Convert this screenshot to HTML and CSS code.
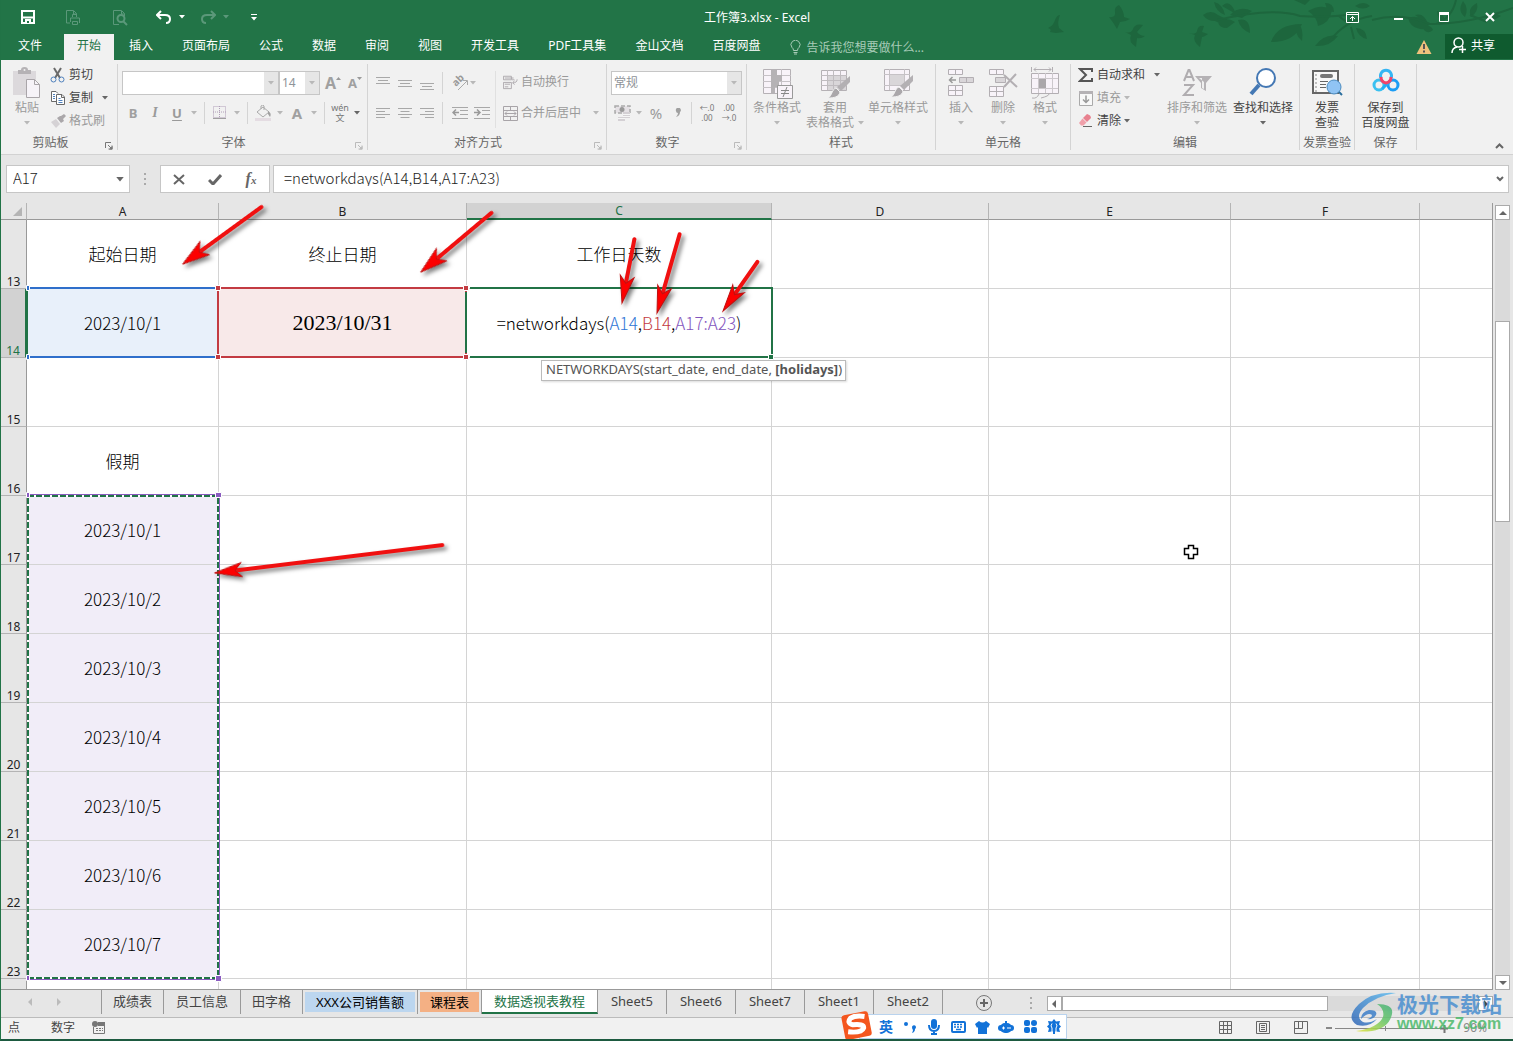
FILE: index.html
```html
<!DOCTYPE html>
<html lang="zh-CN">
<head>
<meta charset="utf-8">
<meta name="viewport" content="width=device-width, initial-scale=1">
<title>工作簿3.xlsx - Excel</title>
<link rel="stylesheet" href="styles.css">
</head>
<body>
<svg class="defs" width="0" height="0" aria-hidden="true">
  <defs>
    <symbol id="caret" viewBox="0 0 6 4"><path d="M0 0h6L3 3.5z" fill="currentColor"/></symbol>
    <symbol id="launcher" viewBox="0 0 8 8"><path d="M.5 6V.5H6M3 3l3.500 3.500M7 3.500V7H3.500" fill="none" stroke="currentColor"/><path d="M7.500 4v3.500H4z" fill="currentColor"/></symbol>
    <symbol id="brush" viewBox="0 0 24 24"><path d="M23 1v6l-9 9-4-4z" fill="#b3b0b3"/><path d="M9 13l4 4c-1 5-6 6-12 6 4-2 4-9 8-10z" fill="#aaa7aa" stroke="#f0f0f0"/></symbol>
  </defs>
</svg>

<header class="top">
  <svg class="foliage" width="480" height="60" viewBox="1033 0 480 60" aria-hidden="true">
    <g fill="#1d663d">
      <path d="M1048 28q6-3 7-8 2-5 5-5-3 7-1 13l5 4-8 1-6-1q2-3-2-4z"/>
      <path d="M1109 17q7 1 6-5-1-5 4-7 5 6 5 12l6 2q-5 3-10 3l-3 7q-4-7-8-12z"/>
      <path d="M1125 32q6 2 8-3 2-6 10-4l-6 7q3 4 8 4-4 3-8 2l-1 9q-8-5-5-12z"/>
      <path d="M1189 33q7 2 8-2 1-6 7-5l-2 6 6 2q-4 3-6 3l-2 10q-8-6-5-12z"/>
      <path d="M1203 15q8-6 15 0l8 4q-4 6-11 2-8 0-12-6zM1214 2q9 2 11 13-9-3-11-13zM1218 22q8-6 17 0l-8 6q-8 0-9-6zM1230 15q9-10 22-4l-10 7zM1238 20q12-3 12 13-10-4-12-13zM1222 6q8-8 14 8z"/>
      <path d="M1271 42q6-18 31-18-7 18-31 18zM1298 24q6 4 4 17-9-7-4-17zM1308 11q14-8 24-1-2 13-14 16-1-9-10-15zM1315 46q9-13 23-10-8 11-23 10zM1294 0h16l-5 5zM1325 3q9 0 9 9-7 0-9-9zM1356 28q10 0 11 11-9-2-11-11zM1355 6q9-6 15 0-7 5-15 0z"/>
      <path d="M1408 18q12-4 21 6-2 8-12 4-7-2-9-10zM1415 15q9-3 13 9zM1422 26q9-2 11 4-7 6-11-4zM1437 11q0 9 8 11-1-9-8-11zM1463 1q-6 10 2 16 4-9-2-16zM1477 3q-10 5-6 14 8-6 6-14zM1485 18q8-8 16-2-8 6-16 2z"/>
    </g>
    <path d="M1218 20q55-13 82-4 30 2 51-2M1329 42q16-22 43-26M1351 27l3 12M1372 20q30-8 58 4 40 0 83-16M1436 24q16-6 20-24M1470 15l17 7M1339 16q13 12 12 0" fill="none" stroke="#1d663d" stroke-width="2"/>
  </svg>
  <div class="titlebar">
    <div class="qat">
      <button aria-label="保存"><svg width="14" height="14" viewBox="0 0 14 14"><path d="M1 1h12v12H1zM1 7.500h12" fill="none" stroke="#fff" stroke-width="2"/><path d="M4 9h6v5H4z" fill="#fff"/><path d="M6 11h2v2H6z" fill="#227447"/></svg></button>
      <button aria-label="快速打印"><svg width="18" height="17" viewBox="0 0 18 17" fill="none" stroke="#5b987a"><path d="M5 14H1.500V1.500h7l3 3V6M8.500 2v3h3M7.500 8V5.500h4V8M5.500 13V9h9v5M7.500 12.500h5v3h-5z"/></svg></button>
      <button aria-label="打印预览"><svg width="16" height="17" viewBox="0 0 16 17" fill="none" stroke="#5b987a"><path d="M7 15.500H1.500v-14h8l3 3V7M9.500 2v3h3"/><circle cx="9" cy="9.500" r="3.500" stroke-width="2"/><path d="M11 12l4 4" stroke-width="2"/></svg></button>
      <button class="pair" aria-label="撤消"><svg width="16" height="14" viewBox="0 0 16 14"><path d="M2 5h7q5 0 5 4t-4 4" fill="none" stroke="#fff" stroke-width="2"/><path d="M5 1L1 5l4 4" fill="none" stroke="#fff" stroke-width="2"/></svg><svg class="c"><use href="#caret"/></svg></button>
      <button class="pair dim" aria-label="恢复"><svg width="16" height="14" viewBox="0 0 16 14"><path d="M14 5H7q-5 0-5 4t4 4M11 1l4 4-4 4" fill="none" stroke="currentColor" stroke-width="2"/></svg><svg class="c"><use href="#caret"/></svg></button>
      <button class="more" aria-label="自定义快速访问工具栏"><svg width="6" height="7" viewBox="0 0 6 7"><path d="M0 0h6v1H0zM0 3h6L3 6.500z" fill="#fff"/></svg></button>
    </div>
    <h1>工作簿3.xlsx - Excel</h1>
    <div class="winbtns">
      <button aria-label="功能区显示选项"><svg width="13" height="11" viewBox="0 0 13 11"><path d="M.5.500h12v10H.5zM.5 2.500h12M6.500 9V4.500M4 7l2.500-2.500L9 7" fill="none" stroke="#fff"/></svg></button>
      <button aria-label="最小化"><svg width="10" height="10" viewBox="0 0 10 10"><path d="M1 6h9v2H1z" fill="#fff"/></svg></button>
      <button aria-label="最大化"><svg width="10" height="10" viewBox="0 0 10 10"><path d="M.5.500h9v9h-9z" fill="none" stroke="#fff"/><path d="M0 0h10v3H0z" fill="#fff"/></svg></button>
      <button aria-label="关闭"><svg width="10" height="10" viewBox="0 0 10 10"><path d="M1 1l8 8M9 1L1 9" stroke="#fff" stroke-width="2"/></svg></button>
    </div>
  </div>
  <nav class="tabs">
    <a href="#" class="file">文件</a><a href="#" class="on">开始</a><a href="#">插入</a><a href="#">页面布局</a><a href="#">公式</a><a href="#">数据</a><a href="#">审阅</a><a href="#">视图</a><a href="#">开发工具</a><a href="#">PDF工具集</a><a href="#">金山文档</a><a href="#">百度网盘</a>
    <label class="tell"><svg width="11" height="15" viewBox="0 0 11 15" fill="none" stroke="#a7cbb7"><path d="M3.500 10.500Q3.500 8.500 2 7.500a4.500 4.500 0 1 1 7 0Q7.500 8.500 7.500 10.500zM3.500 12.500h4M4 14h3"/></svg><input type="text" placeholder="告诉我您想要做什么..." aria-label="告诉我您想要做什么"></label>
    <svg class="warn" width="16" height="14" viewBox="0 0 16 14"><path d="M8 0l7.500 14H.5z" fill="#efc27c"/><path d="M7 4h2v5H7zM7 10.500h2v2H7z" fill="#555"/></svg>
    <button class="share"><svg width="16" height="17" viewBox="0 0 16 17" fill="none" stroke="#fff" stroke-width="1.500"><circle cx="7.500" cy="5.500" r="4.500"/><path d="M1 16q0-5 5-6M8 12.500h7M11.500 9v7"/></svg>共享</button>
  </nav>
</header>

<section class="ribbon" aria-label="功能区">
  <div class="group g-clip">
    <div class="body">
      <button class="big off"><svg width="30" height="32" viewBox="0 0 30 32"><path d="M1 4h23v24H1z" fill="#dcd9dc"/><path d="M6 3h3q0-3 3.500-3T16 3h3v4H6z" fill="#b5b2b5"/><circle cx="12.500" cy="3" r="1" fill="#f0f0f0"/><path d="M14.500 12.500h8l5 5v13h-13z" fill="#f6f3f8" stroke="#a9a5a9"/><path d="M22.500 12.500v5h5" fill="none" stroke="#a9a5a9"/></svg><span>粘贴</span><svg class="c"><use href="#caret"/></svg></button>
      <div class="stack">
        <button><svg width="16" height="16" viewBox="0 0 16 16"><path d="M4 1l6 10M11 1L5 11" stroke="#6a6a6a" stroke-width="2"/><circle cx="3.500" cy="12.500" r="2.500" fill="none" stroke="#4f81bd"/><circle cx="11.500" cy="12.500" r="2.500" fill="none" stroke="#4f81bd"/></svg>剪切</button>
        <button><svg width="16" height="16" viewBox="0 0 16 16"><path d="M6 11.500H1.500v-10H6l2 2" fill="#fff" stroke="#6a6a6a"/><path d="M6.500 4.500H12l2.500 2.500v7.500h-8zM11.500 4.500v3h3" fill="#fff" stroke="#6a6a6a"/><path d="M3 4.500h2M3 6.500h2M3 8.500h2M8.500 8.500h2M8.500 10.500h4M8.500 12.500h4" stroke="#4f81bd"/></svg>复制<svg class="c far"><use href="#caret"/></svg></button>
        <button class="off"><svg width="16" height="16" viewBox="0 0 16 16"><path d="M11 3l3-2 2 2-3 3 1 2-3 2-4-5 3-2z" fill="#aaa7aa"/><path d="M6 6l4 5-4 4-5-6z" fill="#d5d2d5"/></svg>格式刷</button>
      </div>
    </div>
    <footer>剪贴板<svg class="l dark"><use href="#launcher"/></svg></footer>
  </div>

  <div class="group g-font off">
    <div class="body rows">
      <div class="row top-row">
        <label class="combo w-name"><select aria-label="字体"><option></option></select><svg class="c"><use href="#caret"/></svg></label><label class="combo w-size"><select aria-label="字号"><option>14</option></select><svg class="c"><use href="#caret"/></svg></label>
        <button class="ic grow"><b class="f18">A</b><svg width="5" height="12" viewBox="0 0 5 12"><path d="M0 3l2.500-3L5 3z" fill="currentColor"/></svg></button>
        <button class="ic"><b>A</b><svg width="5" height="12" viewBox="0 0 5 12"><path d="M0 0h5L2.500 3z" fill="currentColor"/></svg></button>
      </div>
      <div class="row">
        <button class="ic"><b>B</b></button><button class="ic"><i>I</i></button><button class="ic"><u>U</u></button><button class="ar"><svg class="c"><use href="#caret"/></svg></button>
        <span class="sep"></span>
        <button class="ic"><svg width="14" height="14" viewBox="0 0 14 14"><path d="M.5.500h12v11H.5zM6.500 0v12M0 6h13" fill="none" stroke="#b09fb8" stroke-dasharray="1 1"/><path d="M0 12h13v1H0z" fill="#a0a0a0"/></svg></button><button class="ar"><svg class="c"><use href="#caret"/></svg></button>
        <span class="sep"></span>
        <button class="ic"><svg width="17" height="17" viewBox="0 0 17 17"><path d="M0 13h16v3H0z" fill="#e4dce2"/><path d="M2 7l6-5 6 5-6 5zM6 4V1q2-2 3 0v4" fill="none" stroke="#aaa"/><path d="M13 6q4 2 2 6l-2-3z" fill="#a0a0a0"/></svg></button><button class="ar"><svg class="c"><use href="#caret"/></svg></button>
        <button class="ic"><b class="f15">A</b></button><button class="ar"><svg class="c"><use href="#caret"/></svg></button>
        <span class="sep"></span>
        <button class="ic wen"><span>wén</span><span>文</span></button><button class="ar on"><svg class="c"><use href="#caret"/></svg></button>
      </div>
    </div>
    <footer>字体<svg class="l"><use href="#launcher"/></svg></footer>
  </div>

  <div class="group g-align off">
    <div class="body rows">
      <div class="row top-row">
        <button class="ic"><svg width="14" height="14" viewBox="0 0 14 14"><path d="M0 1.500h14M2 4.500h10M0 7.500h14" stroke="#a8a8a8"/></svg></button>
        <button class="ic"><svg width="14" height="14" viewBox="0 0 14 14"><path d="M0 4.500h14M2 7.500h10M0 10.500h14" stroke="#a8a8a8"/></svg></button>
        <button class="ic"><svg width="14" height="14" viewBox="0 0 14 14"><path d="M0 7.500h14M2 10.500h10M0 13.500h14" stroke="#a8a8a8"/></svg></button>
        <span class="sep tight"></span>
        <button class="ic"><svg class="orient" width="18" height="18" viewBox="0 0 18 18"><text x="5" y="13" font-size="10" font-weight="bold" fill="#999" transform="rotate(-45 5 13)">ab</text><path d="M7 16L16 7M12 6.500h4.500V11" fill="none" stroke="#aaa"/></svg></button><button class="ar narrow"><svg class="c"><use href="#caret"/></svg></button>
      </div>
      <div class="row">
        <button class="ic"><svg width="14" height="12" viewBox="0 0 14 12"><path d="M0 1.500h14M0 4.500h9M0 7.500h14M0 10.500h9" stroke="#a8a8a8"/></svg></button>
        <button class="ic"><svg width="14" height="12" viewBox="0 0 14 12"><path d="M0 1.500h14M2.500 4.500h9M0 7.500h14M2.500 10.500h9" stroke="#a8a8a8"/></svg></button>
        <button class="ic"><svg width="14" height="12" viewBox="0 0 14 12"><path d="M0 1.500h14M5 4.500h9M0 7.500h14M5 10.500h9" stroke="#a8a8a8"/></svg></button>
        <span class="sep tight"></span>
        <button class="ic"><svg width="16" height="14" viewBox="0 0 16 14"><path d="M0 1.500h16M8 4.500h8M8 8.500h8M0 12.500h16" stroke="#a8a8a8"/><path d="M7 6.500H1M4 3.500l-3 3 3 3" fill="none" stroke="#999" stroke-width="1.500"/></svg></button>
        <button class="ic"><svg width="16" height="14" viewBox="0 0 16 14"><path d="M0 1.500h16M8 4.500h8M8 8.500h8M0 12.500h16" stroke="#a8a8a8"/><path d="M0 6.500h6M3 3.500l3 3-3 3" fill="none" stroke="#999" stroke-width="1.500"/></svg></button>
      </div>
    </div>
    <div class="wraps">
      <button><svg width="15" height="16" viewBox="0 0 17 16" fill="none" stroke="#a8a4a8"><path d="M.5 1.500h9v4h-9zM.5 8.500h9v7h-9zM2 3.500h10M2 10.500h6M2 13.500h4M10 5.500h3M16 5q0 4-5 4M13 6.500L11 9l2 2"/></svg>自动换行</button>
      <button><svg width="15" height="15" viewBox="0 0 15 15" fill="none" stroke="#a8a4a8"><path d="M.5.500h14v14H.5zM.5 4.500h14M.5 10.500h14M7.500 0v4M7.500 11v4M2 7.500h11M4 5.500l-2 2 2 2M11 5.500l2 2-2 2"/></svg>合并后居中<svg class="c far"><use href="#caret"/></svg></button>
    </div>
    <footer>对齐方式<svg class="l"><use href="#launcher"/></svg></footer>
  </div>

  <div class="group g-num off">
    <div class="body rows">
      <div class="row top-row"><label class="combo w-num"><select aria-label="数字格式"><option>常规</option></select><svg class="c"><use href="#caret"/></svg></label></div>
      <div class="row">
        <button class="ic"><svg width="17" height="16" viewBox="0 0 17 16"><path d="M1 1h15v7H1z" fill="#e5e1e5" stroke="#aaa" stroke-width="1.500" stroke-dasharray="4 2"/><circle cx="8" cy="4.500" r="2.500" fill="#999"/><path d="M9 7h7v6H9zM4 12h7v4H4z" fill="#d4d0d4"/><path d="M9 9.500h7M9 11.500h7M4 13.500h7" stroke="#f5f5f5"/></svg></button><button class="ar"><svg class="c"><use href="#caret"/></svg></button>
        <button class="ic pct">%</button><button class="ic"><svg width="6" height="10" viewBox="0 0 6 10"><path d="M1 3a2.500 2.500 0 1 1 4 1Q5 8 1 9 3 7 3 5 1 5 1 3z" fill="#a0a0a0"/></svg></button>
        <span class="sep slim"></span>
        <button class="ic dec"><span>←.0</span><span>.00</span></button><button class="ic dec"><span>.00</span><span>→.0</span></button>
      </div>
    </div>
    <footer>数字<svg class="l"><use href="#launcher"/></svg></footer>
  </div>

  <div class="group g-style">
    <div class="body">
      <button class="big off"><svg width="32" height="32" viewBox="0 0 32 32"><path d="M2.500 2.500h27v24h-27z" fill="#f8f3f9" stroke="#b5b1b5"/><path d="M2 8.500h28M2 14.500h28M2 20.500h28M20.500 2v24" stroke="#c6c2c6"/><path d="M10 2h6v6h-6zM10 8h11v6H10zM10 14h8v6h-8zM10 20h4v6h-4z" fill="#b5b2b5"/><path d="M16.500 18.500h15v13h-15z" fill="#f8f3f9" stroke="#999"/><path d="M20 23.500h8M20 26.500h8M26 20l-4 10" stroke="#888"/></svg><span>条件格式</span><svg class="c"><use href="#caret"/></svg></button>
      <button class="big off mid"><svg width="32" height="32" viewBox="0 0 32 32"><path d="M2.500 3.500h25v20h-25z" fill="#f8f3f9" stroke="#b5b1b5"/><path d="M9 9h18v14H9z" fill="#d9d6d9"/><path d="M2 8.500h26M2 13.500h26M2 18.500h26M8.500 3v20M14.500 3v20M21.500 3v20" stroke="#c0bcc0"/><use href="#brush" x="8" y="8" width="24" height="24"/></svg><span>套用<br>表格格式<svg class="c"><use href="#caret"/></svg></span></button>
      <button class="big off wide"><svg width="32" height="32" viewBox="0 0 32 32"><path d="M2.500 2.500h25v21h-25z" fill="#f8f3f9" stroke="#b5b1b5"/><path d="M2 7.500h26M2 18.500h26M7.500 2v21M22.500 2v21" stroke="#c6c2c6"/><path d="M8 8h14v10H8z" fill="#d9d6d9"/><use href="#brush" x="8" y="7" width="24" height="24"/></svg><span>单元格样式</span><svg class="c"><use href="#caret"/></svg></button>
    </div>
    <footer>样式</footer>
  </div>

  <div class="group g-cells">
    <div class="body">
      <button class="big off"><svg width="28" height="32" viewBox="0 0 28 32" fill="#f8f3f9" stroke="#b3afb3"><path d="M1.500 2.500h14v5h-14zM8.500 2v5M1.500 18.500h14v10h-14zM8.500 18v10M1 23.500h14"/><path d="M12.500 10.500h14v5h-14zM19.500 10v5" fill="#d9d6d9"/><path d="M9 13H3M5.500 10L2.500 13l3 3" fill="none" stroke="#999" stroke-width="1.500"/></svg><span>插入</span><svg class="c"><use href="#caret"/></svg></button>
      <button class="big off"><svg width="30" height="32" viewBox="0 0 30 32" fill="#f8f3f9" stroke="#b3afb3"><path d="M1.500 2.500h14v5h-14zM8.500 2v5M1.500 19.500h14v10h-14zM8.500 19v10M1 24.500h14"/><path d="M7.500 10.500h10v5h-10z" fill="#d9d6d9"/><path d="M16 8l13 12M28 7L16 20" fill="none" stroke-width="2"/></svg><span>删除</span><svg class="c"><use href="#caret"/></svg></button>
      <button class="big off"><svg width="28" height="32" viewBox="0 0 28 32" fill="#f8f3f9" stroke="#b3afb3"><path d="M.5 6.500h27v20H.5z"/><path d="M0 11.500h27M0 21.500h27M7.500 6v20M14.500 6v20M21.500 6v20" stroke="#ccc8cc"/><path d="M8 12h7v9H8z" fill="#aaa7aa" stroke="none"/><path d="M.5 0v5M21.500 0v5M3 2.500h17M5 .5l-2 2 2 2M18 .5l2 2-2 2M1 31q5 1 7-4M10 31q8-2 8-4" fill="none"/></svg><span>格式</span><svg class="c"><use href="#caret"/></svg></button>
    </div>
    <footer>单元格</footer>
  </div>

  <div class="group g-edit">
    <div class="body">
      <div class="stack">
        <button><svg width="16" height="16" viewBox="0 0 16 16"><path d="M14 5V2H2l6 6-6 6h12v-3" fill="none" stroke="#555" stroke-width="2"/></svg>自动求和<svg class="c far"><use href="#caret"/></svg></button>
        <button class="off"><svg width="16" height="16" viewBox="0 0 16 16"><path d="M1.500 1.500h13v14h-13z" fill="#f8f8f8" stroke="#aaa"/><path d="M1 1h14v3H1z" fill="#b5b2b5"/><path d="M8 5.500v7M5 9.500l3 3 3-3" fill="none" stroke="#999" stroke-width="1.500"/></svg>填充<svg class="c"><use href="#caret"/></svg></button>
        <button><svg width="16" height="16" viewBox="0 0 16 16"><path d="M9 1q4 1 4 4L9 9 5 5z" fill="#e8818f"/><path d="M4.500 5.500l4 4-3 3H3L1 10z" fill="#f0a0aa"/><path d="M5 13.500h9" stroke="#666"/></svg>清除<svg class="c"><use href="#caret"/></svg></button>
      </div>
      <button class="big off"><svg width="30" height="32" viewBox="0 0 30 32"><path d="M2 14L6.500 3h1L12 14M4 10h6M2 18h9L2 28h10" fill="none" stroke="#b0adb0" stroke-width="2"/><path d="M13 9h17l-6 7v8l-5-3v-5z" fill="#b5b2b5"/><path d="M17 11h3v10l2 1v-7z" fill="#efefef"/></svg><span>排序和筛选</span><svg class="c"><use href="#caret"/></svg></button>
      <button class="big"><svg width="30" height="32" viewBox="0 0 30 32"><circle cx="18" cy="11" r="9" fill="#fff" stroke="#4478b4" stroke-width="2"/><path d="M11 18l-8 9" stroke="#4478b4" stroke-width="4"/></svg><span>查找和选择</span><svg class="c"><use href="#caret"/></svg></button>
    </div>
    <footer>编辑</footer>
  </div>

  <div class="group g-inv">
    <div class="body"><button class="big"><svg width="32" height="32" viewBox="0 0 32 32"><path d="M2 4h25v22H2z" fill="#f8f8f8" stroke="#666" stroke-width="2"/><path d="M5 7v18" stroke="#888" stroke-dasharray="2 2"/><rect x="9" y="7" width="13" height="4" rx="2" fill="#777"/><path d="M9 14.500h8M9 17.500h6M9 20.500h6" stroke="#666"/><circle cx="23" cy="20" r="7" fill="#90c4f4" stroke="#4c8cc0"/><path d="M28 25l3 3" stroke="#2a6e9e" stroke-width="2"/></svg><span>发票<br>查验</span></button></div>
    <footer>发票查验</footer>
  </div>
  <div class="group g-save">
    <div class="body"><button class="big"><svg width="28" height="32" viewBox="0 0 28 32" fill="none" stroke-width="3"><circle cx="7" cy="18" r="5" stroke="#3ac0f0"/><circle cx="21" cy="18" r="5" stroke="#1b9df5"/><path d="M10 22l8-8" stroke="#22aef5"/><path d="M9 11a5.500 5.500 0 1 1 10 0" stroke="#35b5f3"/><path d="M9 10q0 5 5 6 5-1 5-6" stroke="#f0446a"/></svg><span>保存到<br>百度网盘</span></button></div>
    <footer>保存</footer>
  </div>
  <button class="collapse" aria-label="折叠功能区"><svg width="9" height="6" viewBox="0 0 9 6"><path d="M1 5l3.500-3.500L8 5" fill="none" stroke="#666" stroke-width="2"/></svg></button>
</section>

<section class="formula" aria-label="编辑栏">
  <label class="namebox"><input type="text" value="A17" aria-label="名称框"><svg class="c"><use href="#caret"/></svg></label>
  <svg class="grip" width="3" height="12" viewBox="0 0 3 12"><path d="M0 0h2v2H0zM0 5h2v2H0zM0 10h2v2H0z" fill="#aaa"/></svg>
  <div class="fbtns">
    <button aria-label="取消"><svg width="12" height="11" viewBox="0 0 12 11"><path d="M1 1l10 9M11 1L1 10" stroke="#666" stroke-width="2"/></svg></button>
    <button aria-label="输入"><svg width="14" height="11" viewBox="0 0 14 11"><path d="M1 6l4 4 8-9" fill="none" stroke="#666" stroke-width="3"/></svg></button>
    <button aria-label="插入函数" class="fx">f<small>x</small></button>
  </div>
  <label class="fbox"><input type="text" value="=networkdays(A14,B14,A17:A23)" aria-label="公式"><svg width="8" height="6" viewBox="0 0 8 6"><path d="M1 1l3 3 3-3" fill="none" stroke="#666" stroke-width="2"/></svg></label>
</section>

<main class="sheet">
  <div class="grid">
    <table>
      <colgroup><col class="c0"><col class="ca"><col class="cb"><col class="cc"><col class="cd"><col class="ce"><col class="cf"><col></colgroup>
      <thead><tr><th class="corner"><svg width="9" height="9" viewBox="0 0 9 9"><path d="M9 0v9H0z" fill="#b4b4b4"/></svg></th><th>A</th><th>B</th><th class="sel">C</th><th>D</th><th>E</th><th>F</th><th></th></tr></thead>
      <tbody>
        <tr><th>13</th><td>起始日期</td><td>终止日期</td><td>工作日天数</td><td></td><td></td><td></td><td></td></tr>
        <tr><th class="sel">14</th><td class="blue">2023/10/1</td><td class="red">2023/10/31</td><td>=networkdays(<span class="t-blue">A14</span>,<span class="t-red">B14</span>,<span class="t-pur">A17:A23</span>)</td><td></td><td></td><td></td><td></td></tr>
        <tr><th>15</th><td></td><td></td><td></td><td></td><td></td><td></td><td></td></tr>
        <tr><th>16</th><td>假期</td><td></td><td></td><td></td><td></td><td></td><td></td></tr>
        <tr><th>17</th><td class="pur">2023/10/1</td><td></td><td></td><td></td><td></td><td></td><td></td></tr>
        <tr><th>18</th><td class="pur">2023/10/2</td><td></td><td></td><td></td><td></td><td></td><td></td></tr>
        <tr><th>19</th><td class="pur">2023/10/3</td><td></td><td></td><td></td><td></td><td></td><td></td></tr>
        <tr><th>20</th><td class="pur">2023/10/4</td><td></td><td></td><td></td><td></td><td></td><td></td></tr>
        <tr><th>21</th><td class="pur">2023/10/5</td><td></td><td></td><td></td><td></td><td></td><td></td></tr>
        <tr><th>22</th><td class="pur">2023/10/6</td><td></td><td></td><td></td><td></td><td></td><td></td></tr>
        <tr><th>23</th><td class="pur">2023/10/7</td><td></td><td></td><td></td><td></td><td></td><td></td></tr>
        <tr><th></th><td></td><td></td><td></td><td></td><td></td><td></td><td></td></tr>
      </tbody>
    </table>
    <div class="hint">NETWORKDAYS(start_date, end_date, <b>[holidays]</b>)</div>
    <svg class="marks" width="1490" height="786" viewBox="1 203 1490 786" aria-hidden="true">
      <g fill="none" stroke-width="2">
        <path d="M27 288h191M27 357h191" stroke="#2f6fcb"/>
        <path d="M27 288v69" stroke="#217346"/>
        <path d="M218 288h248v69H218z" stroke="#c33b42"/>
        <path d="M470 288h302v69M768 357H470M466 292v61" stroke="#217346"/>
        <path d="M28 496h190v482H28z" stroke="#fff"/>
        <path d="M28 496h190v482H28z" stroke="#217346" stroke-dasharray="6 2"/>
        <path d="M219.500 496v483M27 494.500h192M27 979.500h192" stroke="#8a5bc0" stroke-width="1"/>
      </g>
      <g stroke="#fff">
        <path d="M26.500 285.500h3v5h-3zM26.500 354.500h3v5h-3z" fill="#2f6fcb"/>
        <path d="M215.500 285.500h5v5h-5zM215.500 354.500h5v5h-5zM463.500 285.500h5v5h-5zM463.500 354.500h5v5h-5z" fill="#c33b42"/>
        <path d="M768.500 354.500h5v5h-5z" fill="#217346"/>
        <path d="M26.500 492.500h3v5h-3zM215.500 492.500h6v5h-6zM26.500 975.500h3v5h-3zM215.500 975.500h6v6h-6z" fill="#8a5bc0"/>
      </g>
      <g class="arrows">
        <g transform="translate(183 264) rotate(144)"><path d="M-97 0h77"/><path class="h" d="M0 0L-27-8-20 0-27 8z"/></g>
        <g transform="translate(421 272) rotate(140)"><path d="M-92 0h72"/><path class="h" d="M0 0L-27-8-20 0-27 8z"/></g>
        <g transform="translate(622 303) rotate(101)"><path d="M-65 0h45"/><path class="h" d="M0 0L-27-7-20 0-27 7z"/></g>
        <g transform="translate(657 313) rotate(106)"><path d="M-82 0h62"/><path class="h" d="M0 0L-27-7-20 0-27 7z"/></g>
        <g transform="translate(723 311) rotate(125)"><path d="M-60 0h40"/><path class="h" d="M0 0L-27-7-20 0-27 7z"/></g>
        <g transform="translate(215 573) rotate(173)"><path d="M-229 0h209"/><path class="h" d="M0 0L-27-7-20 0-27 7z"/></g>
      </g>
      <path d="M1188.500 545.500h5v3h4v6h-4v4h-5v-4h-4v-6h4z" fill="#fff" stroke="#000" stroke-width="1.500"/>
    </svg>
  </div>
  <div class="vscroll">
    <button aria-label="向上"><svg width="8" height="4" viewBox="0 0 8 4"><path d="M0 4h8L4 0z" fill="#666"/></svg></button>
    <div class="vtrack"><div class="vthumb"></div></div>
    <button aria-label="向下"><svg width="8" height="4" viewBox="0 0 8 4"><path d="M0 0h8L4 4z" fill="#666"/></svg></button>
  </div>
</main>

<nav class="sheets">
  <div class="arrowsnav"><svg width="4" height="8" viewBox="0 0 4 8"><path d="M4 0v8L0 4z" fill="#bbb"/></svg><svg width="4" height="8" viewBox="0 0 4 8"><path d="M0 0v8l4-4z" fill="#bbb"/></svg></div>
  <a href="#">成绩表</a><a href="#" class="w2">员工信息</a><a href="#">田字格</a><a href="#" class="cblue"><span>XXX公司销售额</span></a><a href="#" class="cor"><span>课程表</span></a><a href="#" class="active">数据透视表教程</a><a href="#" class="s">Sheet5</a><a href="#" class="s">Sheet6</a><a href="#" class="s">Sheet7</a><a href="#" class="s">Sheet1</a><a href="#" class="s">Sheet2</a>
  <button class="add" aria-label="新工作表"><svg width="16" height="16" viewBox="0 0 16 16"><circle cx="8" cy="8" r="7.500" fill="none" stroke="#777"/><path d="M4 8h8M8 4v8" stroke="#666" stroke-width="2"/></svg></button>
  <svg class="grip2" width="3" height="12" viewBox="0 0 3 12"><path d="M0 0h2v2H0zM0 5h2v2H0zM0 10h2v2H0z" fill="#aaa"/></svg>
  <div class="hscroll">
    <button aria-label="向左"><svg width="4" height="8" viewBox="0 0 4 8"><path d="M4 0v8L0 4z" fill="#666"/></svg></button>
    <div class="hthumb"></div>
    <button aria-label="向右"><svg width="4" height="8" viewBox="0 0 4 8"><path d="M0 0v8l4-4z" fill="#444"/></svg></button>
  </div>
</nav>

<footer class="status">
  <span class="mode">点</span><span class="num">数字</span>
  <svg width="13" height="13" viewBox="0 0 13 13"><path d="M3 2.500h9.500v10H1.500V6" fill="none" stroke="#777"/><path d="M6 1h7v4H6z" fill="#777"/><circle cx="3" cy="3" r="3" fill="#777"/><path d="M4 7.500h7M4 9.500h7" stroke="#777" stroke-dasharray="2 1"/></svg>
  <div class="views">
    <svg width="13" height="13" viewBox="0 0 13 13"><path d="M.5.500h12v12H.5zM4.500 0v13M8.500 0v13M0 4.500h13M0 8.500h13" fill="none" stroke="#666"/></svg>
    <svg width="14" height="13" viewBox="0 0 14 13"><path d="M.5.500h13v12H.5zM3.500 2.500h7v8h-7zM5 4.500h4M5 6.500h4M5 8.500h4" fill="none" stroke="#666"/></svg>
    <svg width="14" height="13" viewBox="0 0 14 13"><path d="M.5.500h13v12H.5zM.5 7.500h8M4.500.5v7M8.500.5v7" fill="none" stroke="#666"/></svg>
  </div>
  <svg class="zoom" width="126" height="12" viewBox="0 0 126 12"><path d="M1 5h6v2H1z" fill="#888"/><path d="M10 6.500h105M60.500 4v5" stroke="#888"/><path d="M115 6.500h8M119.500 3v8" stroke="#777" stroke-width="2"/></svg>
  <span class="pct90">90%</span>
</footer>

<div class="ime">
  <svg class="sogou" width="32" height="31" viewBox="0 0 32 31"><g transform="rotate(-11 16 15)"><rect x="2" y="3" width="27" height="25" rx="3" fill="#f4561e"/><path d="M25 8q-9-3-14-1-5 4 1 7 11 1 10 5-3 5-16 1" fill="none" stroke="#fff" stroke-width="5"/></g></svg>
  <b>英</b>
  <svg width="14" height="14" viewBox="0 0 14 14"><circle cx="3" cy="4" r="2" fill="#1272d8"/><path d="M9 7a2 2 0 1 1 3 2q0 3-3 4 1-2 1-3-1-1-1-3z" fill="#1272d8"/></svg>
  <svg width="12" height="16" viewBox="0 0 12 16"><rect x="3" y="0" width="6" height="10" rx="3" fill="#1272d8"/><path d="M1 6q0 6 5 6t5-6M6 12v2M3 15h6" fill="none" stroke="#1272d8" stroke-width="2"/></svg>
  <svg width="15" height="12" viewBox="0 0 15 12"><rect x="1" y="1" width="13" height="10" rx="1" fill="none" stroke="#1272d8" stroke-width="2"/><path d="M3 3.500h9M3 6h9" stroke="#1272d8" stroke-width="1.500" stroke-dasharray="2 1"/><path d="M5 8.500h5" stroke="#1272d8" stroke-width="1.500"/></svg>
  <svg width="15" height="14" viewBox="0 0 15 14"><path d="M4 1q3.500 3 7 0l4 3-2 4-1-1v7H3V7L2 8 0 4z" fill="#1272d8"/></svg>
  <svg width="16" height="14" viewBox="0 0 16 14"><path d="M8 1v3" stroke="#1272d8" stroke-width="2"/><rect x="0" y="5" width="16" height="6" rx="3" fill="#1272d8"/><rect x="2" y="3" width="12" height="10" rx="5" fill="#1272d8"/><path d="M4 8h3M5.500 6.500v3M10 7v2" stroke="#fff"/><path d="M12 7v2" stroke="#fff"/></svg>
  <svg width="13" height="13" viewBox="0 0 13 13" fill="#1272d8"><rect width="6" height="6" rx="2"/><circle cx="10" cy="3" r="3"/><rect y="7" width="6" height="6" rx="2"/><rect x="7" y="7" width="6" height="6" rx="2"/></svg>
  <svg width="14" height="15" viewBox="0 0 14 15"><path d="M7 0l2 2.500 4-.5-1 3.500 2 2-2 2 1 3.500-4-.5H5l-4 .5L2 9.500l-2-2 2-2L1 2l4 .5z" fill="#1272d8"/><path d="M5 13V9Q3 7 5 4.500M9 13V9q2-2 0-4.500" fill="none" stroke="#fff"/><path d="M6 7h2v8H6z" fill="#1272d8"/></svg>
</div>

<div class="brand">
  <svg width="46" height="42" viewBox="0 0 46 42">
    <defs><linearGradient id="bg1" x1="0" y1="1" x2="1" y2="0"><stop offset="0" stop-color="#2f64b5"/><stop offset="1" stop-color="#61bdf0"/></linearGradient><linearGradient id="bg2" x1="0" y1="1" x2="1" y2="0"><stop offset="0" stop-color="#e6e43a"/><stop offset=".6" stop-color="#63c466"/><stop offset="1" stop-color="#46b07c"/></linearGradient></defs>
    <path d="M45 1Q22-1 8 12-6 26 6 33q12 3 20-6-8 5-14 3-8-5 0-14Q24 4 45 1z" fill="url(#bg1)"/><path d="M10 27q0-7 8-9 9 0 7 5-3 5-9 4 5-1 5-4-4-3-11 4z" fill="#3d7fc9"/><path d="M26 12q17 0 15 10-3 14-20 17-10 1-16 0 22-3 27-14 2-8-6-13z" fill="url(#bg2)"/>
  </svg>
  <div><strong>极光下载站</strong><span>www.xz7.com</span></div>
</div>
</body>
</html>
```
FILE: styles.css
```css
* { box-sizing: border-box; }
body {
  margin: 0; height: 100vh; display: flex; flex-direction: column; position: relative; overflow: hidden;
  font: 12px/16px "Noto Sans", "Noto Sans CJK SC", sans-serif; color: #444; background: #e6e6e6;
  border-left: 1px solid #217346; border-bottom: 2px solid #1d5a40;
}
button, input, select { font: inherit; color: inherit; background: none; border: 0; padding: 0; margin: 0; }
button { display: flex; align-items: center; justify-content: center; }
a { color: inherit; text-decoration: none; }
svg { flex: none; }
.defs { position: absolute; }
.c { width: 6px; height: 4px; color: #666; }
.off { color: #9a9a9a; }
.off .c { color: #b8b8b8; }

/* title bar and tabs */
.top { position: relative; background: #227447; color: #fff; }
.foliage { position: absolute; right: 0; top: 0; }
.titlebar, .tabs { position: relative; display: flex; align-items: center; }
.titlebar { height: 34px; display: grid; grid-template-columns: 1fr auto 1fr; }
.titlebar h1 { margin: 0; padding-top: 2px; font: inherit; }
.qat { display: flex; align-items: center; padding-left: 4px; height: 32px; }
.qat button { width: 46px; height: 32px; }
.qat .pair { gap: 7px; margin-left: 4px; }
.qat .pair + .pair { margin-left: -2px; }
.qat .more { margin-left: -6px; }
.qat .c { color: #fff; }
.qat .dim, .qat .dim .c { color: #5b987a; }
.winbtns { display: flex; justify-content: flex-end; height: 32px; }
.winbtns button { width: 46px; }
.tabs { height: 26px; align-items: stretch; }
.tabs a { padding: 4px 14px 0; margin-right: 1px; white-space: nowrap; }
.tabs .file { width: 62px; padding-left: 17px; }
.tabs .on { background: #f1f1f1; color: #217346; padding: 4px 13px 0; }
.tell { display: flex; align-items: center; gap: 5px; padding: 1px 0 0 15px; flex: 1; }
.tell input { width: 150px; color: #a7cbb7; }
.tell input::placeholder { color: #a7cbb7; }
.warn { margin: 6px 13px 0 0; }
.share { width: 68px; height: 25px; gap: 4px; background: #0f5b2f; justify-content: flex-start; padding: 0 0 2px 6px; }

/* ribbon */
.ribbon { display: flex; height: 95px; background: #f1f1f1; border-bottom: 1px solid #d2d2d2; padding-top: 4px; position: relative; }
.group { height: 86px; border-right: 1px solid #d4d4d4; display: grid; grid-template-rows: 70px 16px; flex: none; }
.group footer { grid-column: 1 / -1; grid-row: 2; text-align: center; color: #666; position: relative; line-height: 18px; }
.l { position: absolute; right: 4px; bottom: 0; width: 8px; height: 8px; color: #bbb; }
.l.dark { color: #777; }
.body { display: flex; }
.g-clip { width: 117px; }
.g-clip footer { padding-right: 17px; }
.g-font { width: 250px; }
.g-font footer, .g-align footer, .g-num footer { padding-right: 18px; }
.g-align { width: 239px; grid-template-columns: 127px 1fr; }
.g-num { width: 140px; }
.g-style { width: 189px; }
.g-cells { width: 135px; }
.g-edit { width: 229px; }
.g-inv { width: 55px; }
.g-save { width: 62px; }
.g-clip .body { padding-left: 3px; }
.g-cells .body { padding-left: 4px; }
.g-edit .body { padding-left: 7px; }
.g-inv .body, .g-save .body { justify-content: center; }
.big { flex-direction: column; justify-content: flex-start; padding-top: 3px; width: 60px; line-height: 15px; white-space: nowrap; }
.big > .c { margin-top: 6px; }
.big > span { margin-top: 1px; }
.g-clip .big { width: 46px; }
.g-cells .big { width: 42px; }
.g-edit .big { width: 66px; }
.g-inv .big { width: 54px; }
.g-style .wide { width: 70px; }
.g-style .mid { width: 56px; }
.mid .c { margin: 0 0 2px 4px; }
.stack { display: flex; flex-direction: column; margin-top: -1px; }
.stack button { height: 23px; gap: 3px; justify-content: flex-start; white-space: nowrap; }
.far { margin-left: 6px; }
.g-edit .stack { width: 86px; }
.rows { flex-direction: column; padding-left: 4px; }
.row { display: flex; align-items: center; height: 22px; }
.top-row { margin: 7px 0 8px; height: 23px; }
.ic { width: 22px; height: 22px; font-size: 13px; }
.ic b { font-weight: 700; color: #a0a0a0; }
.ic i { font-family: "Liberation Serif", serif; font-weight: 700; font-size: 14px; }
.ic u { font-weight: 700; text-underline-offset: 2px; }
.ic .f18 { font-size: 16px; }
.ic .f15 { font-size: 15px; }
.ar { width: 12px; height: 22px; }
.ar.on .c { color: #666; }
.narrow { width: 4px; }
.sep { width: 1px; height: 22px; background: #d4d4d4; margin: 0 4px; }
.sep.tight { margin: 0 6px 0 4px; }
.sep.slim { margin: 0 4px 0 2px; }
.grow { margin-left: 2px; }
.combo { display: flex; align-items: center; position: relative; height: 24px; border: 1px solid #c6c6c6; background: #fff; }
.combo select { appearance: none; flex: 1; align-self: stretch; min-width: 0; padding-left: 2px; color: #8f9499; }
.combo .c { width: 14px; height: 22px; padding: 9px 4px; background: #e6e6e6; }
.w-name { width: 157px; }
.w-size { width: 41px; }
.w-num { width: 131px; }
.wen { flex-direction: column; font-size: 9px; line-height: 10px; color: #777; }
.wen span, .dec span { display: block; height: 10px; }
.dec { flex-direction: column; font-size: 8px; line-height: 10px; color: #777; }
.pct { font-size: 15px; width: 22px; }
.orient { overflow: visible; }
.wraps { padding-left: 7px; display: flex; flex-direction: column; gap: 9px; border-left: 1px solid #e0e0e0; margin: 7px 0 6px; }
.wraps button { height: 22px; gap: 3px; justify-content: flex-start; white-space: nowrap; }
.wraps .far { margin-left: 9px; }
.collapse { position: absolute; right: 9px; bottom: 5px; }

/* formula bar */
.formula { display: flex; align-items: center; height: 48px; padding: 0 4px 0 5px; font-size: 15px; }
.formula label, .fbtns { height: 28px; background: #fff; border: 1px solid #c6c6c6; display: flex; align-items: center; }
.namebox { width: 124px; padding: 0 5px 0 6px; }
.namebox input { flex: 1; min-width: 0; }
.namebox .c { width: 8px; height: 5px; }
.grip { margin: 0 13px 0 14px; }
.fbtns { width: 110px; }
.fbtns button { flex: 1; }
.fx { font: italic 700 16px/16px "Liberation Serif", serif; color: #666; align-items: baseline; }
.fx small { font-size: 11px; }
.fbox { flex: 1; margin-left: 3px; padding: 0 4px 0 10px; }
.fbox input { flex: 1; }
.formula input { font-family: "Noto Sans CJK SC", sans-serif; font-weight: 300; color: #222; padding-bottom: 2px; }

/* grid */
.sheet { flex: 1; min-height: 0; display: flex; }
.grid { flex: 1; position: relative; overflow: hidden; border-right: 1px solid #999; border-bottom: 1px solid #999; }
table { width: 100%; table-layout: fixed; border-collapse: separate; border-spacing: 0; }
.c0 { width: 26px; } .ca { width: 192px; } .cb { width: 248px; } .cc { width: 305px; }
.cd { width: 217px; } .ce { width: 242px; } .cf { width: 189px; }
th { font-weight: 400; color: #222; background: #e6e6e6; padding: 0; }
thead th { height: 17px; padding-top: 2px; line-height: 14px; border-bottom: 1px solid #999; border-right: 1px solid #b4b4b4; }
thead .sel { background: #d2d2d2; border-bottom: 2px solid #217346; color: #217346; padding-top: 1px; }
thead .corner { padding: 0 4px 0 0; }
.corner svg { display: block; margin-left: auto; }
tbody th { height: 69px; vertical-align: bottom; border-bottom: 1px solid #b4b4b4; border-right: 1px solid #999; line-height: 12px; }
tbody th.sel { background: #d2d2d2; border-right: 2px solid #217346; color: #217346; }
td { padding: 0; text-align: center; vertical-align: middle; border-right: 1px solid #d4d4d4; border-bottom: 1px solid #d4d4d4; background: #fff;
  font: 300 17px/24px "Noto Sans CJK SC", sans-serif; color: #000; }
tr > :last-child { border-right: 0; }
.blue { background: #e8f0fa; }
.red { background: #f8e9e9; font: 22px/24px "Liberation Serif", serif; }
.pur { background: #f1edf8; }
.t-blue { color: #2f75d6; } .t-red { color: #c33b42; } .t-pur { color: #8355bd; }
.marks { position: absolute; left: 0; top: 0; pointer-events: none; }
.arrows { filter: drop-shadow(3px 3px 2px rgba(0, 0, 0, .5)); }
.arrows path { stroke: #f01010; stroke-width: 4; stroke-linecap: round; fill: none; }
.arrows .h { fill: #fc0000; stroke: #c01010; stroke-width: 1; }
.hint { position: absolute; left: 540px; top: 157px; height: 21px; padding: 0 3px 0 4px; font-size: 13px; line-height: 17px; background: #fff; border: 1px solid #bbb; color: #555; white-space: nowrap; box-shadow: 1px 1px 2px rgba(0, 0, 0, .15); }
.vscroll { width: 16px; margin: 2px 2px 0; display: flex; flex-direction: column; }
.vscroll button, .hscroll button { width: 15px; height: 15px; background: #fff; border: 1px solid #aaa; }
.vtrack { flex: 1; width: 15px; background: #dadada; padding-top: 101px; }
.vthumb { height: 201px; background: #fff; border: 1px solid #aaa; }

/* sheet tabs */
.sheets { display: flex; height: 28px; border-bottom: 1px solid #bbb; font-size: 13px; }
.arrowsnav { width: 101px; padding: 8px 40px 0 27px; display: flex; justify-content: space-between; border-right: 1px solid #999; height: 24px; }
.sheets a { height: 24px; line-height: 23px; padding: 0 11px; border-right: 1px solid #999; white-space: nowrap; }
.sheets .w2 { padding: 0 12px; }
.sheets .cblue, .sheets .cor { padding: 2px 2px; color: #000; line-height: 20px; }
.sheets a span { display: block; padding: 0 11px; background: #bcd6ef; }
.sheets .cor span { background: #f4b084; padding: 0 10px; }
.sheets .active { background: #fff; color: #217346; border-bottom: 2px solid #217346; padding: 0 12px; }
.sheets .s { width: 69px; text-align: center; padding: 0; }
.add { margin: 0 38px 0 33px; height: 26px; }
.grip2 { margin-top: 7px; }
.hscroll { flex: 1; display: flex; height: 15px; margin: 6px 20px 0 14px; background: #dadada; }
.hthumb { width: 266px; background: #fff; border: 1px solid #aaa; }
.hscroll button:last-child { margin-left: auto; }

/* status bar */
.status { height: 21px; display: flex; align-items: center; background: #f1f1f1; padding: 0 26px 2px 7px; }
.num { margin: 0 17px 0 31px; }
.views { margin-left: auto; display: flex; gap: 24px; }
.zoom { margin: 0 12px 0 17px; }
.pct90 { color: #888; }

/* floating input bar and watermark */
.ime { position: absolute; left: 858px; bottom: 0; height: 25px; width: 208px; padding-left: 14px; background: #fff; border: 1px solid #b9d3ee; display: grid; grid-template-columns: repeat(8, 24px); align-items: center; justify-items: center; color: #1272d8; }
.ime b { font-size: 14px; }
.sogou { position: absolute; left: -19px; top: -5px; }
.brand { position: absolute; right: 11px; bottom: 5px; display: flex; align-items: center; opacity: .85; }
.brand > div { display: flex; flex-direction: column; }
.brand strong { font-size: 21px; line-height: 22px; color: #4a8fd0; }
.brand span { font: 700 16px/18px "Liberation Sans", sans-serif; color: #4cb96c; }
```
